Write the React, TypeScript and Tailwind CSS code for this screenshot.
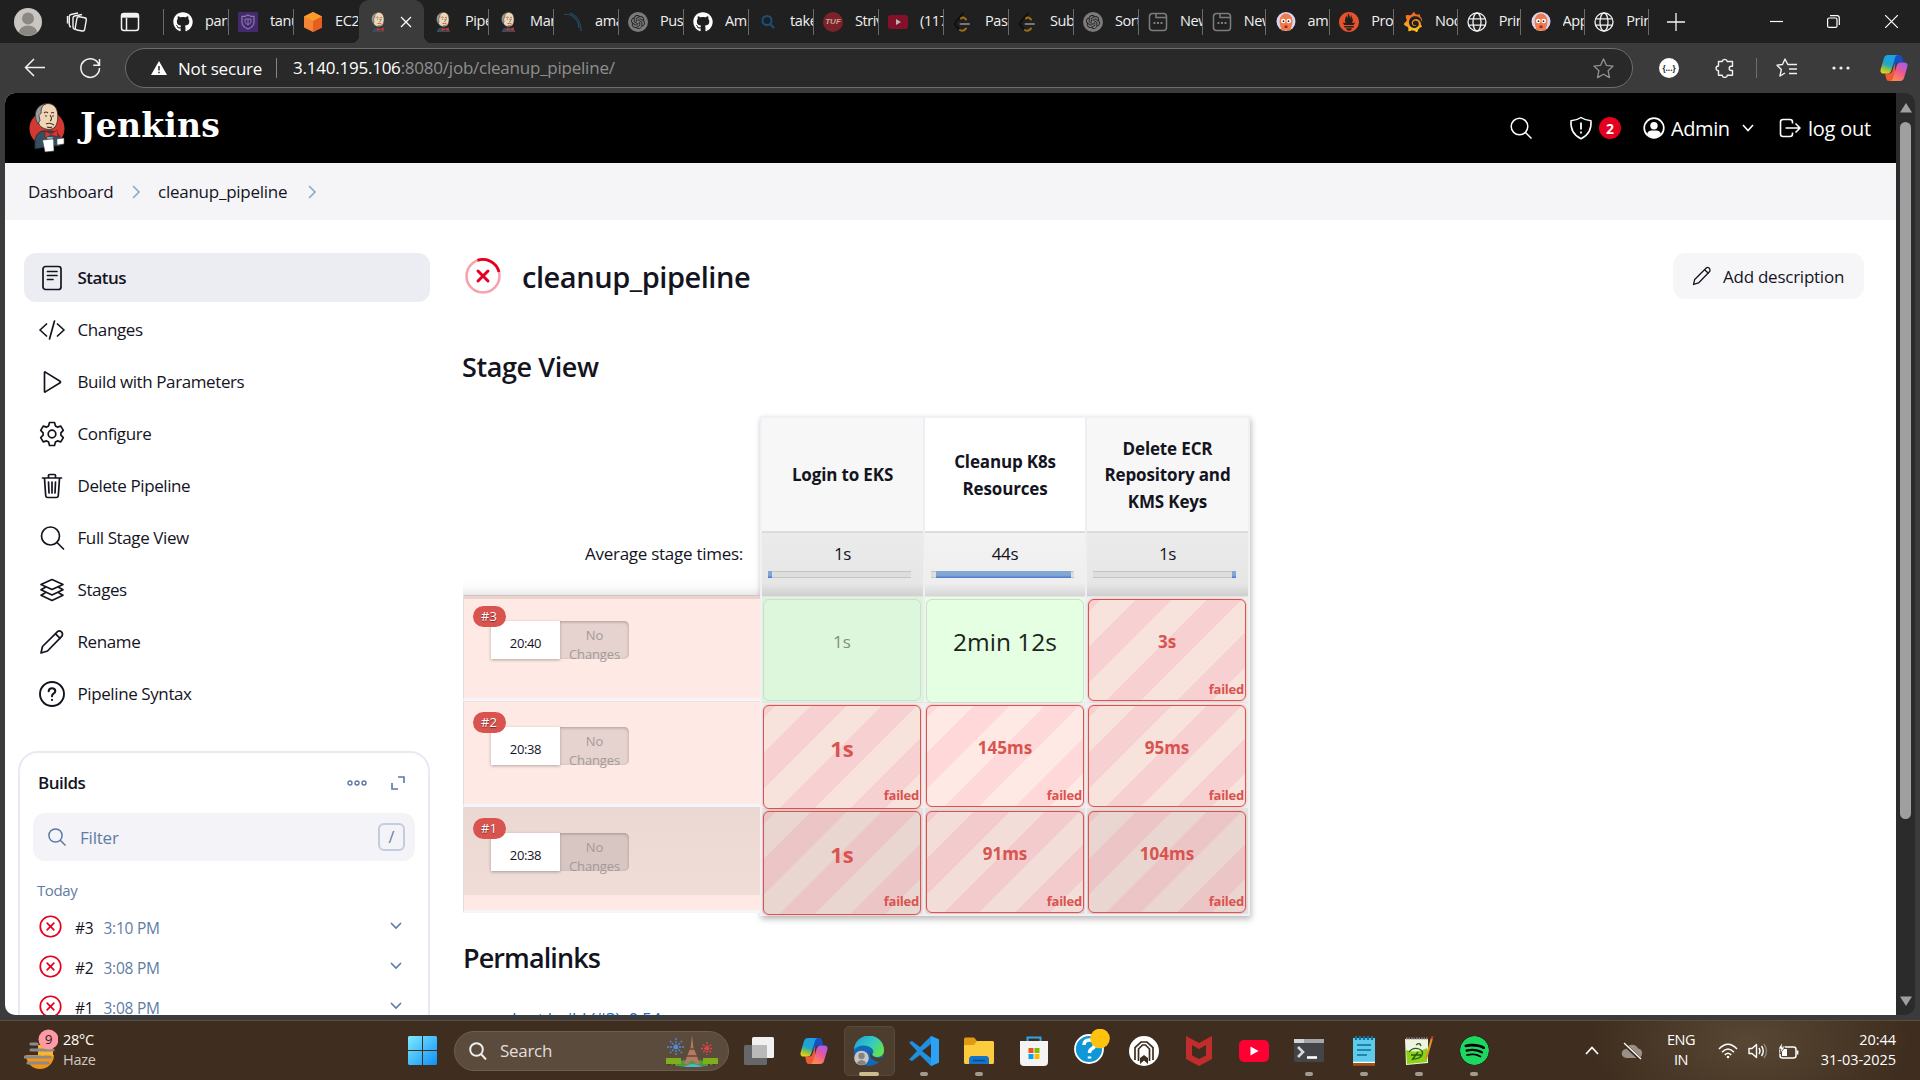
import React from "react";
import { SiOpenai, SiPrometheus, SiGrafana, SiSpotify } from "react-icons/si";
import { FaGithub } from "react-icons/fa";

type P = { className?: string };

/* ---------- small drawings ---------- */

const Butler = ({ className, full }: P & { full?: boolean }) => (
  <svg viewBox={full ? "0 0 36 50" : "4 0 28 36"} className={className}>
    {full && <ellipse cx="18" cy="25.500" rx="17.5" ry="17.500" fill="#d33833" />}
    <path d="M6 46C5 34 8 29 14 28l8 0c7 1 10 5 10 12l-1 3-8 0z" fill="#335061" stroke="#1a252c" strokeWidth=".8" />
    <path d="M9 19C7 13 8 6 12 3c5-4 12-3 15 2 3 6 2 15-1 19-3 3-8 3-12 1-3-1-4-4-5-6z" fill="#f0d6b7" stroke="#3a332c" strokeWidth=".9" />
    <path d="M9 21C4 13 6 2 17 .7 12.500 3 12 6 12.200 10l-2.200 2.500 1 5z" fill="#9a9a9a" stroke="#333" strokeWidth=".8" />
    <path d="M15 10q2-2 4 0M22 10q2-1 3 0M16 13h2M23 13h2M21 12q3 4 0 6M17 21q4-2 8 1M18 24q3 1 5 0" stroke="#49362b" strokeWidth="1.1" fill="none" />
    <path d="M16 28l6 3 6-4 1 7-7-2-6 3z" fill="#d33833" stroke="#6d1412" strokeWidth=".5" />
    {full && (
      <>
        <path d="M18 34h6l-2 5h-3z" fill="#81b0c4" />
        <path d="M13.500 37l11-1 .5 12-9 1z" fill="#fff" stroke="#444" strokeWidth=".6" />
        <path d="M28 36l7-1v6l-7 1z" fill="#fff" stroke="#555" strokeWidth=".6" />
      </>
    )}
  </svg>
);

const Globe = ({ className }: P) => (
  <svg viewBox="0 0 20 20" className={className} fill="none" stroke="#f1f1f1" strokeWidth="1.3">
    <circle cx="10" cy="10" r="9" />
    <ellipse cx="10" cy="10" rx="4" ry="9" />
    <path d="M1.8 6.8h16.4M1.8 13.2h16.4" />
  </svg>
);
const OpenAi = ({ className }: P) => (
  <span className={`${className} flex items-center justify-center rounded-full bg-[#7b7b7b]`}>
    <SiOpenai className="size-3.5 text-[#222]" />
  </span>
);
const Shield = ({ className }: P) => (
  <svg viewBox="0 0 20 20" className={className}>
    <rect width="20" height="20" fill="#45296f" />
    <path d="M10 3l3 1.3h3v6c0 3.500-3 5.500-6 6.700-3-1.200-6-3.200-6-6.700v-6h3z" fill="none" stroke="#8b78ad" strokeWidth="1.200" />
    <path d="M7 7h6v3.500L10 13l-3-2.500zM10 7v5" fill="none" stroke="#8b78ad" />
  </svg>
);
const Ec2 = ({ className }: P) => (
  <svg viewBox="0 0 20 20" className={className}>
    <path d="M10 0l9 4.500v11L10 20l-9-4.500v-11z" fill="#f58536" />
    <path d="M10 0l9 4.500L10 9 1 4.500z" fill="#fb9d2b" />
    <path d="M10 9l9-4.500v11L10 20z" fill="#e65f1d" />
  </svg>
);
const Dragon = ({ className }: P) => (
  <svg viewBox="0 0 20 20" className={className} fill="none" stroke="#26506a" strokeWidth="1.100">
    <path d="M1 2.500c6-1 10 2 13 6M7 1c6 2 11 8 11 18M8 3c5 3 8 8 8 13" />
  </svg>
);
const Find = ({ className }: P) => (
  <svg viewBox="0 0 20 20" className={className} fill="none" stroke="#17527f" strokeWidth="2">
    <circle cx="9" cy="8.500" r="4.500" />
    <path d="M12 12l4 4" />
  </svg>
);
const Tuf = ({ className }: P) => (
  <span className={`${className} flex items-center justify-center rounded-full bg-[#7b2326] font-['Liberation_Sans'] text-[8px] font-bold italic leading-none text-[#c9a3a3]`}>TUF</span>
);
const YtDim = ({ className }: P) => (
  <svg viewBox="0 0 20 20" className={className}>
    <rect y="3" width="20" height="14" rx="3" fill="#851029" />
    <path d="M8 7l5 3-5 3z" fill="#b6b6b6" />
  </svg>
);
const Leet = ({ className }: P) => (
  <svg viewBox="0 0 20 20" className={className} fill="none" strokeWidth="2" strokeLinecap="round">
    <path d="M10 1.500L3 9.500q-2 2.300 0 4.500L6 17" stroke="#101010" />
    <path d="M8 6.500q2-2 4 0l1 1M7 18q3 2 6-1.500" stroke="#a06d14" />
    <path d="M7.500 12h8.500" stroke="#767676" />
  </svg>
);
const News = ({ className }: P) => (
  <svg viewBox="0 0 20 20" className={className} fill="none" stroke="#7d7d7d" strokeWidth="1.500">
    <rect x="1.500" y="1.500" width="17" height="17" rx="3" />
    <path d="M8 1.500v4h10.500" />
    <path d="M5.500 11h2M9 11h2M12.500 11h2" strokeWidth="2" />
  </svg>
);
const Argo = ({ className }: P) => (
  <svg viewBox="0 0 20 20" className={className}>
    <circle cx="10" cy="9.500" r="9.500" fill="#d9d4f0" />
    <path d="M3.500 9a6.500 7.500 0 0113 0c0 4-1.500 6-2 9.500H5.500C5 15 3.500 13 3.500 9z" fill="#ef7b4d" />
    <circle cx="7.300" cy="9" r="2.300" fill="#fff" />
    <circle cx="12.700" cy="9" r="2.300" fill="#fff" />
    <circle cx="7.500" cy="9.200" r=".9" fill="#222" />
    <circle cx="12.500" cy="9.200" r=".9" fill="#222" />
    <path d="M8.500 14q1.500-1.500 3 0v2h-3z" fill="#a32b1b" />
  </svg>
);
const Prom = ({ className }: P) => (
  <span className={className}>
    <SiPrometheus className="size-full text-[#e6522c]" />
  </span>
);
const Graf = ({ className }: P) => (
  <svg viewBox="0 0 20 20" className={className}>
    <defs>
      <linearGradient id="gf" x1="0" y1="1" x2="0" y2="0">
        <stop offset="0" stopColor="#fcc91c" />
        <stop offset="1" stopColor="#f05a28" />
      </linearGradient>
    </defs>
    <SiGrafana size={20} fill="url(#gf)" />
  </svg>
);
const Git = ({ className }: P) => <FaGithub className={`${className} text-white`} />;
const Face = ({ className }: P) => <Butler className={className} />;

const Copilot = ({ className, id }: P & { id: string }) => (
  <svg viewBox="0 0 30 30" className={className}>
    <defs>
      <linearGradient id={id + "a"} x1="0.500" y1="0" x2="0.200" y2="1">
        <stop offset="0" stopColor="#1a9fe8" />
        <stop offset=".5" stopColor="#22a7c0" />
        <stop offset=".8" stopColor="#a8c832" />
        <stop offset="1" stopColor="#fbd115" />
      </linearGradient>
      <linearGradient id={id + "b"} x1="0.800" y1="0" x2="0.300" y2="1">
        <stop offset="0" stopColor="#a45cf0" />
        <stop offset=".45" stopColor="#e8579a" />
        <stop offset="1" stopColor="#ff8a4c" />
      </linearGradient>
    </defs>
    <path d="M14 1h7q2 0 2.700 2.500L25 9h-5q-2.500 0-3.200 2.500L14 20z" fill="#1550c0" />
    <path d="M16 29H9.500q-2.200 0-2.800-2.200L5.500 21H10q2.500 0 3.200-2.500L16 10z" fill="#ee5a35" />
    <path d="M8.500 1H19q-2 0-2.800 2.700L12 18q-1 3-3.600 3H4Q-.5 21 .8 16L4.200 4.500Q5.200 1 8.500 1z" fill={`url(#${id}a)`} />
    <path d="M21.500 29H11q2 0 2.800-2.700L18 12q1-3 3.600-3H26q4.500 0 3.200 5l-3.400 11.500Q24.800 29 21.500 29z" fill={`url(#${id}b)`} />
  </svg>
);

/* ---------- browser chrome ---------- */

const tabsWide: [React.FC<P>, string][] = [
  [Git, "parn"], [Shield, "tanu"], [Ec2, "EC2"], [Face, ""], [Face, "Pipe"], [Face, "Man"], [Dragon, "ama"],
  [OpenAi, "Pus"], [Git, "Am"], [Find, "take"], [Tuf, "Striv"], [YtDim, "(117"], [Leet, "Pasc"], [Leet, "Sub"], [OpenAi, "Sort"],
];
const tabsSlim: [React.FC<P>, string][] = [
  [News, "New"], [News, "New"], [Argo, "am"], [Prom, "Pro"], [Graf, "Nod"], [Globe, "Prin"], [Argo, "App"], [Globe, "Prin"],
];

function Tab({ icon: Icon, text, slim, bare }: { icon: React.FC<P>; text: string; slim?: boolean; bare?: boolean }) {
  return (
    <div className={`flex h-full shrink-0 items-center overflow-hidden pl-[9px] ${slim ? "w-[63.75px]" : "w-[65px]"}`}>
      <Icon className="size-5 shrink-0" />
      <span className={`ml-3 shrink-0 overflow-hidden whitespace-nowrap pb-px text-[14.5px] tracking-[-0.4px] text-[#f0f0f0] ${slim ? "w-[21.500px]" : "w-[23px]"}`}>{text}</span>
      {!bare && <span className="h-[26px] w-px shrink-0 bg-[#6a6a6a]" />}
    </div>
  );
}

const TabBar = () => (
  <div className="flex h-[43px] items-center bg-[#202020]">
    <div className="flex w-[163px] shrink-0 items-center">
      <svg viewBox="0 0 28 28" className="ml-[14px] size-7">
        <circle cx="14" cy="14" r="14" fill="#c9c6c2" />
        <circle cx="14" cy="10.500" r="6" fill="#8b8884" />
        <path d="M5 24.500a9 7 0 0118 0A14 14 0 015 24.500z" fill="#8b8884" />
      </svg>
      <svg viewBox="0 0 22 22" className="ml-6 size-[22px]" fill="none" stroke="#f2f2f2" strokeWidth="1.400">
        <rect x="10" y="6" width="9.500" height="13.500" rx="2" transform="rotate(10 14 13)" />
        <path d="M9 18.500q-2-.4-2-2.500V7q0-1.600 1.600-2L16 3.500M5 16q-1.700-.5-1.700-2.500V5.500q0-1.600 1.600-2L12 2M1.500 12.500V5" />
      </svg>
      <svg viewBox="0 0 20 20" className="ml-[32px] size-5" fill="none" stroke="#f2f2f2" strokeWidth="1.500">
        <rect x="1.500" y="1.500" width="17" height="17" rx="2.500" />
        <path d="M6.500 6v12" />
        <path d="M1.500 3.700h17" strokeWidth="4" />
      </svg>
    </div>
    <span className="h-[26px] w-px bg-[#6a6a6a]" />
    {tabsWide.map(([I, t], i) =>
      t === "" ? (
        <div key={i} className="relative flex h-full w-[65px] shrink-0 items-center rounded-t-[10px] bg-[#3b3b3b] pl-[9px]">
          <span className="absolute -left-2 bottom-0 size-2 bg-[radial-gradient(circle_at_0_0,#202020_8px,#3b3b3b_8.500px)]" />
          <span className="absolute -right-2 bottom-0 size-2 bg-[radial-gradient(circle_at_100%_0,#202020_8px,#3b3b3b_8.500px)]" />
          <I className="size-5" />
          <svg viewBox="0 0 12 12" className="ml-[12px] size-3" stroke="#fff" strokeWidth="1.300"><path d="M1 1l10 10M11 1L1 11" /></svg>
        </div>
      ) : (
        <Tab key={i} icon={I} text={t} bare={i === 2} />
      ),
    )}
    {tabsSlim.map(([I, t], i) => <Tab key={i} icon={I} text={t} slim />)}
    <svg viewBox="0 0 18 18" className="ml-[18px] size-[18px] shrink-0" stroke="#f5f5f5" strokeWidth="1.300"><path d="M9 0v18M0 9h18" /></svg>
    <div className="ml-auto flex items-center pr-[22px]">
      <svg viewBox="0 0 13 13" className="size-[13px]" stroke="#fff" strokeWidth="1.200"><path d="M0 6.500h13" /></svg>
      <svg viewBox="0 0 13 13" className="ml-11 size-[13px]" fill="none" stroke="#fff" strokeWidth="1.200"><rect x=".6" y="3" width="9.400" height="9.400" rx="1.500" /><path d="M3 .7h7q2.300 0 2.300 2.300v7" /></svg>
      <svg viewBox="0 0 13 13" className="ml-[45px] size-[13px]" stroke="#fff" strokeWidth="1.200"><path d="M0 0l13 13M13 0L0 13" /></svg>
    </div>
  </div>
);

const Toolbar = () => (
  <div className="flex h-[50px] shrink-0 items-center bg-[#3b3b3b]">
    <svg viewBox="0 0 22 20" className="ml-6 h-5 w-[22px]" fill="none" stroke="#f2f2f2" strokeWidth="1.500"><path d="M21 9.500H1.500M10 1L1.500 9.500 10 18" /></svg>
    <svg viewBox="0 0 22 22" className="ml-[33px] size-[22px]" fill="none" stroke="#f2f2f2" strokeWidth="1.500"><path d="M20 8A9.300 9.300 0 1020.500 11M20.500 2v6.300h-6.300" /></svg>
    <div className="ml-6 flex h-10 w-[1508px] items-center rounded-full border border-[#6d6d6d] bg-[#292929] pl-[25px] pr-[17px]">
      <svg viewBox="0 0 16 14" className="h-3.5 w-4"><path d="M8 0l8 14H0z" fill="#fff" /><path d="M8 5v4.500M8 10.800v1.500" stroke="#292929" strokeWidth="1.500" /></svg>
      <span className="ml-[11px] w-[98px] whitespace-nowrap pt-0.5 text-[17px] tracking-[-0.200px] text-white">Not secure</span>
      <span className="h-5 w-px bg-[#858585]" />
      <span className="ml-4 text-[17px] tracking-[-0.230px] text-[#8f8f8f]"><span className="text-white">3.140.195.106</span>:8080/job/cleanup_pipeline/</span>
      <svg viewBox="0 0 24 24" className="ml-auto size-[23px]" fill="none" stroke="#909090" strokeWidth="1.400"><path d="M12 2l3 6.700 7 .8-5.200 4.800L18.200 21.500 12 18l-6.200 3.500 1.400-7.200L2 9.500l7-.8z" strokeLinejoin="round" /></svg>
    </div>
    <span className="ml-[26px] flex size-5 items-center justify-center rounded-full bg-white text-[8px] font-bold leading-none text-[#222]">{"{...}"}</span>
    <svg viewBox="0 0 20 20" className="ml-[36px] size-5" fill="none" stroke="#f0f0f0" strokeWidth="1.400"><path d="M3.500 3.500h3.700a2.600 2.600 0 015.100 0H17.500v4.800h-1.200a2 2 0 000 4.200h1.200v4.800h-5.200a2.600 2.600 0 01-5.100 0H3.500v-4.500a2.400 2.400 0 010-4.800z" strokeLinejoin="round" /></svg>
    <span className="ml-[21px] h-5 w-px bg-[#6d6d6d]" />
    <svg viewBox="0 0 22 20" className="ml-[19px] h-5 w-[22px]" fill="none" stroke="#f0f0f0" strokeWidth="1.400"><path d="M14 6.500h-2.200L9 1 6.500 6.500l-5.500.7 4.300 4.300L4 18l5-3M14 6.500h7M13 11h8M13 15.500h8" strokeLinejoin="round" /></svg>
    <svg viewBox="0 0 18 4" className="ml-[34px] h-1 w-[18px]" fill="#f0f0f0"><circle cx="2" cy="2" r="1.600" /><circle cx="9" cy="2" r="1.600" /><circle cx="16" cy="2" r="1.600" /></svg>
    <Copilot id="cpa" className="ml-[30px] size-7" />
  </div>
);

/* ---------- Jenkins page ---------- */

const Chevron = ({ className }: P) => (
  <svg viewBox="0 0 8 14" className={className} fill="none" stroke="#8fa9c4" strokeWidth="1.600"><path d="M1 1l6 6-6 6" /></svg>
);

const Header = () => (
  <div className="flex h-[70px] shrink-0 items-center bg-black text-white">
    <Butler full className="ml-6 mb-px h-[50px] w-9" />
    <span className="ml-[15px] pb-[5px] font-['DejaVu_Serif'] text-[33px] font-bold tracking-[0.200px]">Jenkins</span>
    <div className="ml-auto flex items-center pr-[22px]">
      <svg viewBox="0 0 22 22" className="size-[22px]" fill="none" stroke="#fff" strokeWidth="1.500"><circle cx="9.500" cy="9.500" r="8.300" /><path d="M15.500 15.500L21.500 21.500" /></svg>
      <svg viewBox="0 0 24 24" className="ml-[37px] size-6" fill="none" stroke="#fff" strokeWidth="1.500"><path d="M12 1.500q4.500 3 10 3.200c.7 9-2.500 14.500-10 18-7.500-3.500-10.700-9-10-18q5.500-.2 10-3.200z" strokeLinejoin="round" /><path d="M12 6.500v7" strokeWidth="1.800" /><path d="M12 15.500v2" strokeWidth="1.800" /></svg>
      <span className="ml-1.5 flex size-[22px] items-center justify-center rounded-full bg-[#e6001f] text-[14px] font-bold">2</span>
      <svg viewBox="0 0 22 22" className="ml-[22px] size-[22px]"><circle cx="11" cy="11" r="9.800" fill="none" stroke="#fff" strokeWidth="1.700" /><circle cx="11" cy="8.700" r="3.700" fill="#fff" /><path d="M4 16.500q1.500-3 4-3h6q2.500 0 4 3-3 4-7 4t-7-4z" fill="#fff" /></svg>
      <span className="ml-1.5 w-[58px] whitespace-nowrap pt-px text-[20px] tracking-[-0.400px]">Admin</span>
      <svg viewBox="0 0 12 8" className="ml-[13px] h-2 w-3" fill="none" stroke="#fff" strokeWidth="1.600"><path d="M1 1l5 5.500L11 1" /></svg>
      <svg viewBox="0 0 22 20" className="ml-[25px] h-5 w-[22px]" fill="none" stroke="#fff" strokeWidth="1.600" strokeLinejoin="round"><path d="M13.500 5.500V4q0-2.500-2.500-2.500H4Q1.500 1.500 1.500 4v12q0 2.500 2.500 2.500h7q2.500 0 2.500-2.500v-1.500M6.500 10H20.500M16.500 5.500l4.500 4.500-4.500 4.500" /></svg>
      <span className="ml-[7px] w-[66px] whitespace-nowrap pt-px text-[20px] tracking-[-0.250px]">log out</span>
    </div>
  </div>
);

const ic = "size-[26px] shrink-0";
const line = { fill: "none", stroke: "#14141f", strokeWidth: 1.7, strokeLinecap: "round" as const, strokeLinejoin: "round" as const };
const Pencil = ({ className }: P) => (
  <svg viewBox="0 0 26 26" className={className} {...line}><path d="M2 24l1.500-6.500L18.500 2.600q1.800-1.500 3.700 0t1 4.200L8.500 22zM16.500 4.800l4.700 4.600" /></svg>
);

const menu: [React.ReactNode, string][] = [
  [<svg viewBox="0 0 26 26" className={ic} {...line}><rect x="4" y="1.500" width="18" height="23" rx="2.500" /><path d="M8.500 6.500h9.500M8.500 10.500h9.500M8.500 14.500h5.500" /></svg>, "Status"],
  [<svg viewBox="0 0 26 26" className={ic} {...line}><path d="M7.500 7L1 13l6.500 6M18.500 7l6.500 6-6.500 6M15.500 4l-5 18" /></svg>, "Changes"],
  [<svg viewBox="0 0 26 26" className={ic} {...line}><path d="M5.500 3.500v19q0 .8.800.4l14.800-9.100q.9-.8 0-1.500L6.300 3.100q-.8-.4-.8.400z" /></svg>, "Build with Parameters"],
  [<svg viewBox="0 0 26 26" className={ic} {...line}><circle cx="13" cy="13" r="3.800" /><path d="M10.500 1.500h5l.9 3.400 2 1.200 3.400-1 2.500 4.300-2.400 2.500v2.200l2.400 2.500-2.500 4.300-3.400-1-2 1.200-.9 3.400h-5l-.9-3.400-2-1.200-3.400 1-2.500-4.300L4.100 14.100v-2.200L1.700 9.400l2.500-4.300 3.400 1 2-1.200z" /></svg>, "Configure"],
  [<svg viewBox="0 0 26 26" className={ic} {...line}><path d="M3.500 5h19M9.500 5V2.500q0-1 1-1h5q1 0 1 1V5M5.500 5.500l1.200 17q.2 2 2 2h8.600q1.800 0 2-2l1.200-17M9.500 9l.5 11M13 9v11M16.500 9L16 20" /></svg>, "Delete Pipeline"],
  [<svg viewBox="0 0 26 26" className={ic} {...line}><circle cx="11.500" cy="11" r="9" /><path d="M18 17.500l6.500 6.500" /></svg>, "Full Stage View"],
  [<svg viewBox="0 0 26 26" className={ic} {...line}><path d="M2 7.500L13 2.500l11 5-11 5zM6 10.500l-4 2.300 11 5.200 11-5.200-4-2.300M6 16l-4 2.200 11 5.300 11-5.300L20 16" /></svg>, "Stages"],
  [<Pencil className={ic} />, "Rename"],
  [<svg viewBox="0 0 26 26" className={ic} {...line} strokeWidth={1.900}><circle cx="13" cy="13" r="12" /><path d="M9.700 10.300q.2-3 3.300-3t3.300 2.700q0 1.600-1.800 2.600Q13 13.500 13 15.300M13 18.800v.2" strokeWidth="2.100" /></svg>, "Pipeline Syntax"],
];

const FailIcon = ({ className }: P) => (
  <svg viewBox="0 0 24 24" className={className} fill="none" stroke="#e6001f" strokeWidth="1.800" strokeLinecap="round"><circle cx="12" cy="12" r="10.700" /><path d="M8.500 8.500l7 7M15.500 8.500l-7 7" /></svg>
);

const builds = [["#3", "3:10 PM"], ["#2", "3:08 PM"], ["#1", "3:08 PM"]];

const Sidebar = () => (
  <div className="w-[430px] shrink-0 pt-[33px]">
    <div className="ml-[19px] flex w-[406px] flex-col gap-[3px]">
      {menu.map(([icon, label], i) => (
        <div key={label} className={`flex h-[49px] items-center gap-[13px] rounded-xl pl-[14.500px] text-[17px] ${i === 0 ? "bg-[#ecedf3] font-semibold tracking-[-0.550px]" : "tracking-[-0.400px]"}`}>
          {icon}
          <span className="pt-px">{label}</span>
        </div>
      ))}
    </div>
    <div className="ml-[13px] mt-[33px] h-[400px] w-[412px] rounded-[20px] border-2 border-[#e9e9f3] px-[13px]">
      <div className="flex h-[60px] items-center pb-px pl-[5px] pr-2.5">
        <span className="text-[17px] font-semibold tracking-[-0.500px]">Builds</span>
        <svg viewBox="0 0 20 6" className="ml-auto h-1.5 w-5" fill="none" stroke="#5a79a5" strokeWidth="1.400"><circle cx="3" cy="3" r="2" /><circle cx="10" cy="3" r="2" /><circle cx="17" cy="3" r="2" /></svg>
        <svg viewBox="0 0 14 14" className="ml-6 size-3.5" fill="none" stroke="#5a79a5" strokeWidth="1.600"><path d="M7 1h6v6M1 7v6h6" /></svg>
      </div>
      <div className="flex h-12 items-center rounded-xl bg-[#f3f3f8] pl-[15px] pr-2.5 text-[#5f7ca6]">
        <svg viewBox="0 0 18 18" className="size-[18px]" fill="none" stroke="#5a79a5" strokeWidth="1.500"><circle cx="7.500" cy="7.500" r="6.600" /><path d="M12.300 12.300l5.200 5.200" /></svg>
        <span className="ml-3.5 pt-px text-[17px] tracking-[-0.200px]">Filter</span>
        <span className="ml-auto flex h-7 w-[27px] items-center justify-center rounded-md border-2 border-[#c3cddd] text-[16px]">/</span>
      </div>
      <div className="mt-[18px] pl-1 text-[15px] leading-[22px] tracking-[-0.400px] text-[#5f7ca6]">Today</div>
      <div className="mt-[5px]">
        {builds.map(([n, t]) => (
          <div key={n} className="flex h-10 items-center pl-1.5 pr-[13px] text-[15.500px] tracking-[-0.250px]">
            <FailIcon className="size-[23px]" />
            <span className="ml-[13px] w-[28.500px] pt-[5px]">{n}</span>
            <span className="pt-[5px] text-[#5f7ca6]">{t}</span>
            <svg viewBox="0 0 12 8" className="ml-auto h-2 w-3" fill="none" stroke="#5a79a5" strokeWidth="1.600"><path d="M1 1l5 5 5-5" /></svg>
          </div>
        ))}
      </div>
    </div>
  </div>
);

const stripeSide = "bg-[repeating-linear-gradient(135deg,#f7d0d1_0_8px,#f7e2dc_8px_33px,#f7d0d1_33px_50px)]";
const stripeMid = "bg-[repeating-linear-gradient(135deg,#ffd8d9_0_8px,#ffe9e4_8px_33px,#ffd8d9_33px_50px)]";
const stripeSideDark = "bg-[repeating-linear-gradient(135deg,#ecc5c7_0_8px,#ead6d0_8px_33px,#ecc5c7_33px_50px)]";
const stripeMidDark = "bg-[repeating-linear-gradient(135deg,#f3cbcd_0_8px,#f3ddd8_8px_33px,#f3cbcd_33px_50px)]";

type Cell = { t: string; bg: string; cls: string; ok?: boolean; tall?: boolean };
const mid = "text-[17px] font-bold text-[#d9534f]";
const big = "text-[22px] font-bold text-[#d9534f]";
type Col = { title: string[]; head: string; avgBg: string; avg: string; bar: string; w: string; cells: Cell[] };
const cols: Col[] = [
  {
    title: ["Login to EKS"], head: "bg-[#f7f7f7]", avgBg: "bg-linear-to-b from-[#ebebeb] from-0% via-[#e6e6e6] via-80% to-[#cfcfcf]", avg: "1s", bar: "w-1", w: "w-[163px]",
    cells: [
      { t: "1s", bg: "bg-[#ddf7dc]", cls: "text-[17px] text-[#7f8f80]", ok: true },
      { t: "1s", bg: stripeSide, cls: big, tall: true },
      { t: "1s", bg: stripeSideDark, cls: big, tall: true },
    ],
  },
  {
    title: ["Cleanup K8s", "Resources"], head: "bg-white", avgBg: "bg-linear-to-b from-[#f3f3f3] from-0% via-[#eeeeee] via-80% to-[#d6d6d6]", avg: "44s", bar: "w-[135px] ml-[5px]", w: "w-[162px]",
    cells: [
      { t: "2min 12s", bg: "bg-[#e4ffe2]", cls: "text-[24.500px] text-[#1c241c]", ok: true, tall: true },
      { t: "145ms", bg: stripeMid, cls: mid },
      { t: "91ms", bg: stripeMidDark, cls: mid },
    ],
  },
  {
    title: ["Delete ECR", "Repository and", "KMS Keys"], head: "bg-[#f7f7f7]", avgBg: "bg-linear-to-b from-[#ebebeb] from-0% via-[#e6e6e6] via-80% to-[#cfcfcf]", avg: "1s", bar: "w-1 ml-auto", w: "w-[161px]",
    cells: [
      { t: "3s", bg: stripeSide, cls: mid },
      { t: "95ms", bg: stripeSide, cls: mid },
      { t: "104ms", bg: stripeSideDark, cls: mid },
    ],
  },
];

const StageTable = () => (
  <div className="flex h-[500px] w-[490px] border-2 border-[#f0f0f6] bg-[#f0f0f3] shadow-[1px_3px_6px_rgba(0,0,0,0.28)]">
    {cols.map((c, ci) => (
      <div key={ci} className={`${c.w} shrink-0 ${ci < 2 ? "border-r-2 border-[#efeff3]" : ""}`}>
        <div className={`flex h-[113px] flex-col items-center justify-center pt-0.5 text-[17px] font-bold leading-[26.500px] tracking-[-0.150px] ${c.head}`}>
          {c.title.map((l) => <span key={l}>{l}</span>)}
        </div>
        <div className={`h-[65px] border-t-2 border-[#dcdcdc] pt-2 ${c.avgBg}`}>
          <div className="text-center text-[17px] leading-[26px] tracking-[-0.300px]">{c.avg}</div>
          <div className="ml-1.5 mt-1 flex h-[7px] w-[143px] border-y border-[#c4c4c4] bg-[#dedede]">
            <div className={`-my-px h-[7px] bg-linear-to-b from-[#82a7d2] from-60% to-[#4a77d4] ${c.bar}`} />
          </div>
        </div>
        {c.cells.map((d, ri) => (
          <div key={ri} className={`h-[106px] border-t border-[#e3e3e3] pl-px pr-0.5 pt-0.5 ${d.ok ? (ci ? "bg-[#e4ffe2]" : "bg-[#d9f7d8]") : ri === 2 ? "bg-[#e6e2e4]" : "bg-[#f3eeee]"}`}>
            <div className={`relative flex w-[158px] justify-center rounded-[6px] border-[1.500px] ${d.tall ? "h-[104px]" : "h-[102px]"} ${d.ok ? "border-[#cfdccf]" : "border-[#d9534f] shadow-[0_0_2px_rgba(217,83,79,0.6)]"} ${d.bg}`}>
              <span className={`mt-[26px] h-8 leading-8 ${d.cls}`}>{d.t}</span>
              {!d.ok && <span className={`absolute right-px text-[13px] font-bold leading-[18px] tracking-[-0.250px] text-[#d9534f] ${d.tall ? "bottom-1" : "bottom-0.5"}`}>failed</span>}
            </div>
          </div>
        ))}
      </div>
    ))}
  </div>
);

const runs = [["#3", "20:40"], ["#2", "20:38"], ["#1", "20:38"]];

const Main = () => (
  <div className="flex-1 pl-[28px] pt-[33px]">
    <div className="flex h-[49px] items-center pr-8">
      <svg viewBox="0 0 36 36" className="-mt-1 ml-0.5 size-9" fill="none" stroke="#e6001f" strokeLinecap="round">
        <circle cx="18" cy="18" r="16.500" strokeWidth="2.500" stroke="#f8a0ac" />
        <path d="M12.500 2.400A16.500 16.500 0 0134 14" strokeWidth="2.800" strokeLinecap="butt" />
        <path d="M13 13l10 10M23 13L13 23" strokeWidth="3" />
      </svg>
      <span className="ml-[21px] pb-0.5 text-[29px] font-semibold tracking-[-0.450px]">cleanup_pipeline</span>
      <div className="-mt-1 ml-auto flex h-[46px] w-[191px] items-center rounded-xl bg-[#f6f6f9] pl-[19px]">
        <Pencil className="size-5" />
        <span className="ml-[11px] whitespace-nowrap pt-0.5 text-[17px] tracking-[-0.250px]">Add description</span>
      </div>
    </div>
    <h2 className="-ml-px mt-[45px] text-[27px] font-semibold leading-10 tracking-[-0.400px]">Stage View</h2>
    <div className="mt-[29px] flex">
      <div className="w-[297px] pt-[120px]">
        <div className="h-[59px] bg-[linear-gradient(#fff_70%,#fafafa_88%,#e8e8e8)] pr-[17px] pt-[5px] text-right text-[17px] leading-[26px] tracking-[-0.270px]">Average stage times:</div>
        {runs.map(([n, t], i) => (
          <div key={n} className={`relative h-[106px] border-b-[3px] border-l border-b-[#f6f4f6] border-l-[#dedde2] ${i === 0 ? "bg-[linear-gradient(#cfc3c3_1px,#ead2cd_1px_4px,#ffe9e4_4px)] pt-[26px]" : i === 1 ? "border-t border-t-[#e8e2e4] bg-[#ffe9e4] pt-[25px]" : "border-t border-t-[#e0d8da] bg-[linear-gradient(#ecd8d3,#f0ddd8_87px,#ffe9e4_87px)] pt-[25px]"}`}>
            <div className="ml-[27px] flex h-[38px] text-[13px] leading-[19px]">
              <div className="flex w-[69px] items-center justify-center bg-white pt-[7px] tracking-[-0.350px] shadow-[0_1px_3px_rgba(0,0,0,0.3)]">{t}</div>
              <div className={`w-[69px] rounded-r-[5px] pt-[5px] text-center tracking-[-0.150px] text-[#a29a9b] shadow-[inset_0_1px_3px_rgba(0,0,0,0.25)] ${i === 2 ? "bg-[#d8c6c2]" : "bg-[#e6d2ce]"}`}>No<br />Changes</div>
            </div>
            <span className={`absolute left-[9px] flex h-[21px] w-[33px] items-center justify-center rounded-full bg-[#d9534f] pr-px text-[13px] text-white [text-shadow:0_1px_1px_rgba(0,0,0,0.5)] ${i === 0 ? "top-[11px]" : "top-2.5"}`}>{n}</span>
          </div>
        ))}
      </div>
      <StageTable />
    </div>
    <h2 className="mt-[22px] text-[27px] font-semibold leading-10 tracking-[-0.900px]">Permalinks</h2>
    <div className="mt-[28px] pl-[49px] text-[17px] leading-[26px] tracking-[-0.250px] text-[#0b6fdc]">Last build (#3), 0.54</div>
  </div>
);

/* ---------- taskbar ---------- */

const apps: [React.ReactNode, string][] = [
  [<svg viewBox="0 0 30 30" className="size-[30px]"><rect x="8" y="1" width="22" height="21" rx="1.500" fill="#f1f1f1" /><rect y="9" width="23" height="20" rx="1.500" fill="#66676a" /><path d="M8 9h15v13H8z" fill="#b9b9ba" /></svg>, ""],
  [<Copilot id="cpb" className="size-7" />, ""],
  [
    <svg viewBox="0 0 30 30" className="size-[30px]">
      <defs><linearGradient id="eg" x1="0" y1="0" x2="1" y2=".6"><stop offset="0" stopColor="#1c9fd9" /><stop offset=".6" stopColor="#35cbc0" /><stop offset="1" stopColor="#62e04d" /></linearGradient></defs>
      <circle cx="15" cy="15" r="15" fill="#1268b8" />
      <path d="M0 14A15 14.500 0 0130 14c0 5-3 7-7 7-3 0-5-1-4.500-3 1.500-2 1-4-1-6C12 8 3 9 0 14z" fill="url(#eg)" />
      <path d="M18 14q-2.500 3 .5 6 4 3.500 10.500 1-1.500 3.500-3.500 5-5-.5-8-3.500-3.500-4.500.5-8.500z" fill="#4c3d2e" />
      <circle cx="7.500" cy="22" r="7.300" fill="#c9c6c2" /><circle cx="7.500" cy="20" r="3.200" fill="#86827e" /><path d="M2.500 27q5-6 10 0-5 4-10 0z" fill="#86827e" />
    </svg>, "active"],
  [<svg viewBox="0 0 30 30" className="size-[30px]"><path d="M22 0l8 3.500v23L22 30 11 19 3 25 0 23.500 8 15 0 6.500 3 5l8 6z" fill="#1f8fe0" /><path d="M22 0l8 3.500v23L22 30z" fill="#2ba2f5" /><path d="M22 8v14l-9-7z" fill="#3f2e1e" /></svg>, "run"],
  [<svg viewBox="0 0 30 30" className="size-[30px]"><path d="M0 3q0-1.500 1.500-1.500H10L13 5v6H0z" fill="#e09b13" /><path d="M0 9h10l3-4h15.500Q30 5 30 6.500v20q0 1.500-1.500 1.500h-27Q0 28 0 26.500z" fill="#fdcb3e" /><path d="M5 28v-4.500q0-3.500 3-3.500h14q3 0 3 3.500V28z" fill="#1374c9" /><path d="M9 24.500h12" stroke="#0a4b8d" strokeWidth="1.600" /></svg>, "run"],
  [<svg viewBox="0 0 30 30" className="size-[30px]"><path d="M8.500 6V1.500h13V6" fill="none" stroke="#2ba8ea" strokeWidth="2" /><path d="M1 5h28v21q0 4-4 4H5q-4 0-4-4z" fill="#f4f4f4" /><path d="M9.500 12h5v5h-5z" fill="#f25022" /><path d="M15.500 12h5v5h-5z" fill="#7fba00" /><path d="M9.500 18h5v5h-5z" fill="#00a4ef" /><path d="M15.500 18h5v5h-5z" fill="#ffb900" /></svg>, ""],
  [<svg viewBox="0 0 36 36" className="size-9"><circle cx="15" cy="20" r="14" fill="#1097d8" stroke="#fff" strokeWidth="1.800" /><path d="M10 16q0-5 5.500-5t5 5q0 2.500-3 4-2 1.200-2 4M15.500 27.500v2" stroke="#fff" strokeWidth="3.500" fill="none" /><circle cx="26" cy="9.500" r="9.800" fill="#ffc20e" /></svg>, "help"],
  [<svg viewBox="0 0 30 30" className="size-[30px]"><circle cx="15" cy="15" r="15" fill="#fff" /><path d="M6 24V11.500L12 6h6l6 5.500V24M9.500 25V13l4-4h3l4 4v12" stroke="#3d2d1f" strokeWidth="1.700" fill="none" /><path d="M11 28V22l4-3 4 3v6l-4-3.500z" fill="#3d2d1f" /></svg>, ""],
  [<svg viewBox="0 0 28 30" className="h-[30px] w-7"><path d="M1 0l13 7L27 0v23l-13 7L1 23zM7 9v10.500l7 3.500 7-3.500V9l-7 4z" fill="#c32c2c" fillRule="evenodd" /></svg>, ""],
  [<svg viewBox="0 0 30 22" className="h-[22px] w-[30px]"><rect width="30" height="22" rx="5" fill="#ff0033" /><path d="M11.500 6.500l8 4.500-8 4.500z" fill="#fff" /></svg>, ""],
  [<svg viewBox="0 0 30 24" className="h-6 w-[30px]"><rect width="30" height="23" rx="1.500" fill="#434548" /><path d="M0 0h30v4H0z" fill="#a5a6a8" /><path d="M0 0h10v4H0z" fill="#d2d3d4" /><path d="M4 8l5 5-5 5" stroke="#d9d9d9" strokeWidth="2.600" fill="none" /><path d="M13 18.500h10" stroke="#fff" strokeWidth="2.600" /></svg>, "run"],
  [<svg viewBox="0 0 24 30" className="h-[30px] w-6"><rect x="1" y="2" width="22" height="25" fill="#5fcbea" /><path d="M1 26.500h22" stroke="#fff" strokeWidth="1.500" /><path d="M1 28.500h22" stroke="#a8520f" strokeWidth="2.500" /><path d="M4 0v4M8 0v4M12 0v4M16 0v4M20 0v4" stroke="#11729e" strokeWidth="2.200" /><path d="M5 9h14M5 14h14M5 19h10" stroke="#0d6f99" strokeWidth="1.700" /></svg>, "run"],
  [<svg viewBox="0 0 30 30" className="size-[30px]"><path d="M1 3h23v24L2 29z" fill="#eef5df" /><path d="M2 14q10 4 21-2v14L3 28z" fill="#8ad316" /><path d="M2 2.500h22" stroke="#888" strokeWidth="2" strokeDasharray="1.500 1" /><path d="M5 16q4-5 10-3 5 2 3 6t-9 4M7 19h10M8 24l6-8M12 9q4-3 5 1" stroke="#2a5a16" strokeWidth="1.300" fill="none" /><path d="M28 2l-6 21" stroke="#d8942a" strokeWidth="2.200" /><path d="M28.500 0L27.800 3" stroke="#b33" strokeWidth="2.200" /></svg>, "run"],
  [<SiSpotify className="size-[29px] rounded-full bg-black text-[#1ed760]" />, "run"],
];

const Taskbar = () => (
  <div className="flex h-[60px] shrink-0 items-center border-t border-[#5b4f41] bg-[#3f2e1f] bg-[radial-gradient(ellipse_160px_90px_at_1750px_20px,#584733,transparent)] text-[14px] text-white">
    <svg viewBox="0 0 34 44" className="ml-6 h-11 w-[34px]">
      <path d="M2 26h28a14 14 0 01-28 0z" fill="#f59518" /><path d="M14 16h15v11H14z" fill="#f8b62b" />
      <path d="M7 15h6M7 21h22M1 28h16M20 28h6M4 34h20" stroke="#8b8a88" strokeWidth="3.200" strokeLinecap="round" />
      <circle cx="24.500" cy="10.500" r="10" fill="#ff99a4" />
      <text x="24.500" y="15.300" textAnchor="middle" fontSize="13.500" fill="#222">9</text>
    </svg>
    <div className="-mt-0.5 ml-[5px] w-[345px] text-[14.500px] leading-5 tracking-[-0.300px]">
      <div>28°C</div>
      <div className="text-[#cfc9c3]">Haze</div>
    </div>
    <svg viewBox="0 0 29 29" className="size-[29px]">
      <defs><linearGradient id="wn" x1="0" y1="0" x2="1" y2="1"><stop offset="0" stopColor="#7feaff" /><stop offset="1" stopColor="#0d90f5" /></linearGradient></defs>
      <path d="M1 0h13v14H0V1zM15 0h13l1 1v13H15zM0 15h14v14H1l-1-1zM15 15h14v13l-1 1H15z" fill="url(#wn)" />
    </svg>
    <div className="ml-[17px] flex h-10 w-[275px] items-center rounded-full border border-[#6c5e4f] bg-[#5a4b3c] pl-3.5 pr-2.5">
      <svg viewBox="0 0 18 18" className="size-[18px]" fill="none" stroke="#eee" strokeWidth="2"><circle cx="7.500" cy="7.500" r="6.300" /><path d="M12 12l5 5.500" /></svg>
      <span className="ml-[13px] pt-px text-[17px] tracking-[-0.300px] text-[#e3deda]">Search</span>
      <svg viewBox="0 0 52 32" className="ml-auto h-8 w-[52px]">
        <ellipse cx="26" cy="28.500" rx="21" ry="3.500" fill="#4e9a44" /><path d="M18 32q8-6 18 0z" fill="#4bb8cf" />
        <path d="M0 23h15v6H0zM37 23h15v6H37z" fill="#7fae1d" /><path d="M3 29v2M8 29v2M43 29v2M48 29v2" stroke="#5a3b1c" strokeWidth="2" />
        <path d="M26 0l1.300 12L34 29h-4q-4-7-8 0h-4l6.700-17z" fill="#b27a63" /><path d="M23 14h6M21 21h10" stroke="#6e4537" strokeWidth="1.500" />
        <path d="M10 3v18M1 12h18M4 6l12 12M16 6L4 18" stroke="#4b8fe0" strokeWidth="1.300" strokeDasharray="2 1" />
        <path d="M41 7v13M35 13.500h12M37 9.500l8 8M45 9.500l-8 8" stroke="#e6404b" strokeWidth="1.400" strokeDasharray="2 1" />
      </svg>
    </div>
    <div className="ml-[2.500px] flex">
      {apps.map(([icon, st], i) => (
        <div key={i} className="relative flex h-[58px] w-[55px] items-center justify-center">
          {st === "active" && <span className="absolute inset-x-[2px] inset-y-1 rounded-[5px] border border-[#594a3a] bg-[#4c3d2e]" />}
          <span className={`relative ${st === "help" ? "-mr-1.5 -mt-2" : ""}`}>{icon}</span>
          {st === "run" && <span className="absolute bottom-[4px] h-1 w-2 rounded-full bg-[#a39b93]" />}
          {st === "active" && <span className="absolute bottom-[4px] h-1 w-5 rounded-full bg-[#cdbd8d]" />}
        </div>
      ))}
    </div>
    <div className="ml-auto flex items-center pr-6">
      <svg viewBox="0 0 14 9" className="h-[9px] w-3.5" fill="none" stroke="#fff" strokeWidth="1.700"><path d="M1 8l6-6.500L13 8" /></svg>
      <svg viewBox="0 0 22 18" className="ml-[22px] h-[18px] w-[22px]"><path d="M5.500 16a4.500 4.500 0 01-.5-9 6.500 6.500 0 0112-.5 4.800 4.800 0 010 9.500z" fill="#9a9088" /><path d="M2 1l17 16" stroke="#3f2e1f" strokeWidth="3.500" /><path d="M3 1l17 16" stroke="#fff" strokeWidth="1.300" /></svg>
      <div className="-mt-px ml-[21px] w-[34px] text-center text-[14.500px] leading-5 tracking-[-0.500px]"><div>ENG</div><div>IN</div></div>
      <svg viewBox="0 0 20 16" className="ml-5 h-4 w-5" fill="none" stroke="#fff" strokeWidth="1.600"><path d="M1 6q9-9.500 18 0M4 9.200q6-6.500 12 0M6.800 12q3.200-3.500 6.400 0" /><circle cx="10" cy="14" r="1.300" fill="#fff" stroke="none" /></svg>
      <svg viewBox="0 0 20 16" className="ml-2.5 h-4 w-5" fill="none" stroke="#fff" strokeWidth="1.400"><path d="M1 5.500h3L8.500 1.500v13L4 10.500H1zM11 5q2 3 0 6M13.500 3q3.500 5 0 10" strokeLinejoin="round" /><path d="M16 1q5 7 0 14" stroke="#8b8076" /></svg>
      <svg viewBox="0 0 21 18" className="ml-2.5 h-[18px] w-[21px]"><rect x="2" y="5" width="16" height="11" rx="2.500" fill="none" stroke="#fff" strokeWidth="1.500" /><path d="M19.500 8.500v4" stroke="#fff" strokeWidth="1.800" /><path d="M4 7h5v7H4z" fill="#fff" /><path d="M4.500 0L0 7h3l-1 5 5-7H4z" fill="#fff" stroke="#3f2e1f" strokeWidth=".7" /></svg>
      <div className="-mt-0.5 ml-[17px] w-[80px] whitespace-nowrap text-right text-[14.500px] leading-5 tracking-[-0.050px]"><div>20:44</div><div>31-03-2025</div></div>
    </div>
  </div>
);

export default function App() {
  return (
    <div className="flex h-[1080px] w-[1920px] flex-col overflow-hidden bg-[#3b3b3b] font-['Open_Sans','Noto_Sans',sans-serif] text-[#14141f]">
      <TabBar />
      <Toolbar />
      <div className="flex h-[922px] shrink-0 overflow-hidden rounded-[10px] pl-[5px] pr-[5px]">
        <div className="flex w-[1891px] flex-col overflow-hidden rounded-l-[10px] bg-white">
          <Header />
          <div className="flex h-[57px] shrink-0 items-center bg-[#f5f5f8] pl-[23px] text-[17px] font-medium tracking-[-0.250px]">
            <span className="w-[104px]">Dashboard</span>
            <Chevron className="h-3.5 w-2" />
            <span className="ml-[18px] w-[150px]">cleanup_pipeline</span>
            <Chevron className="h-3.5 w-2" />
          </div>
          <div className="flex min-h-0 flex-1">
            <Sidebar />
            <Main />
          </div>
        </div>
        <div className="flex flex-1 flex-col items-center rounded-r-[10px] bg-[#2b2b2b] pb-[9px] pt-2.5">
          <svg viewBox="0 0 12 10" className="h-2.5 w-3"><path d="M6 0l6 9.500H0z" fill="#9f9f9f" /></svg>
          <div className="mt-[9px] h-[697px] w-[11px] rounded-full bg-[#9f9f9f]" />
          <svg viewBox="0 0 12 10" className="mt-auto h-2.5 w-3"><path d="M6 10l6-9.500H0z" fill="#9f9f9f" /></svg>
        </div>
      </div>
      <div className="h-[5px] shrink-0" />
      <Taskbar />
    </div>
  );
}
